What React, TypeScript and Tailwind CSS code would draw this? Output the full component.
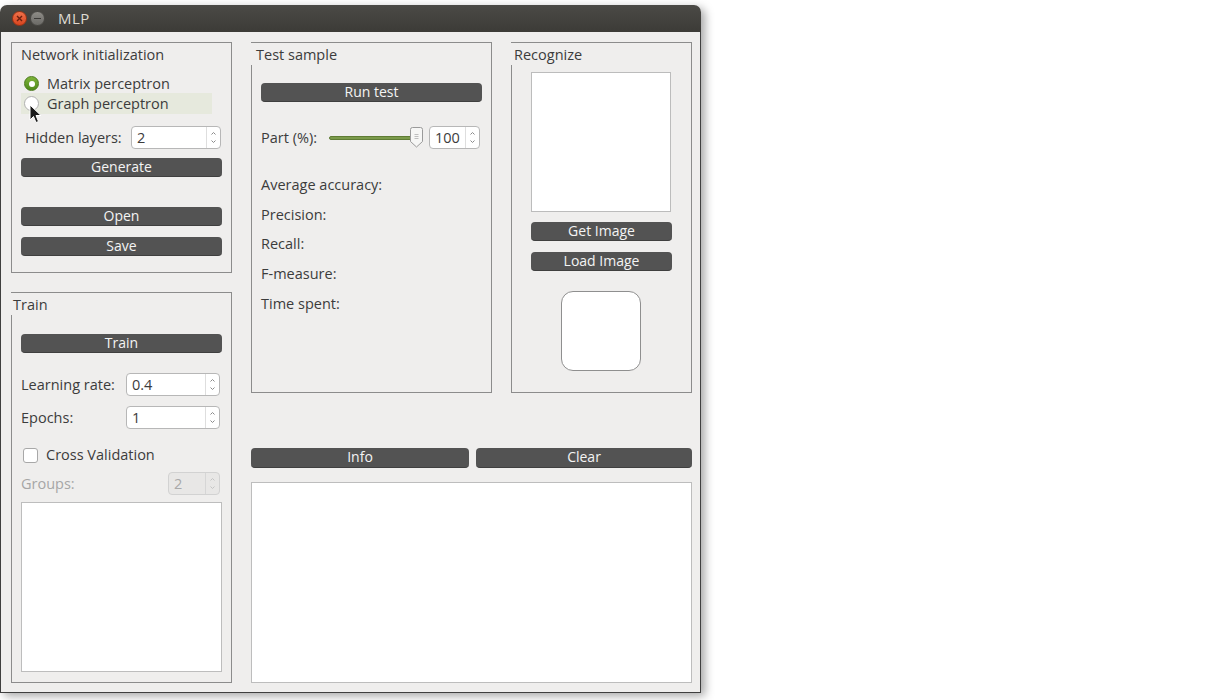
import React from "react";

const txt = "text-[#3c3c3c]";
const fs = "text-[14.5px]";

function Btn({ children, className = "" }: { children: React.ReactNode; className?: string }) {
  return (
    <div
      className={`h-[19px] rounded-[4px] bg-[#535353] border-b border-[#3f3f3f] text-[#f4f4f4] text-[14px] leading-[18px] text-center ${className}`}
    >
      {children}
    </div>
  );
}

function Arrows({ disabled = false }: { disabled?: boolean }) {
  const c = disabled ? "#c4c4c4" : "#8a8a8a";
  return (
    <div className={`w-[14px] border-l ${disabled ? "border-[#d6d6d6]" : "border-[#dedede]"} flex flex-col items-center justify-center gap-[5px]`}>
      <svg width="5" height="3" viewBox="0 0 5 3">
        <path d="M0.5 2.5 L2.5 0.5 L4.5 2.5" stroke={c} strokeWidth="1" fill="none" />
      </svg>
      <svg width="5" height="3" viewBox="0 0 5 3">
        <path d="M0.5 0.5 L2.5 2.5 L4.5 0.5" stroke={c} strokeWidth="1" fill="none" />
      </svg>
    </div>
  );
}

function Spin({ value, className = "", disabled = false }: { value: string; className?: string; disabled?: boolean }) {
  return (
    <div
      className={`flex h-[23px] rounded-[4px] border ${
        disabled ? "border-[#d2d2d2] bg-[#e8e7e6] text-[#a9a9a9]" : "border-[#b7b7b7] bg-white text-[#3c3c3c]"
      } ${className}`}
    >
      <div className="flex-1 pl-[5px] text-[14.5px] leading-[21px]">{value}</div>
      <Arrows disabled={disabled} />
    </div>
  );
}

function Group({
  title,
  className = "",
  children,
  titleClass = "",
  cover = true,
}: {
  title: string;
  className?: string;
  children?: React.ReactNode;
  titleClass?: string;
  cover?: boolean;
}) {
  return (
    <div className={`border border-[#8c8c8c] flex flex-col ${className}`}>
      <div className={`h-[22px] pt-[2px] flex items-center ${cover ? "-ml-px bg-[#efeeed] self-start pr-[3px]" : ""} ${titleClass}`}>
        <span className={`${fs} ${txt}`}>{title}</span>
      </div>
      {children}
    </div>
  );
}

export default function App() {
  return (
    <div className="w-[1220px] h-[700px] bg-white pt-[5px] font-['Open_Sans',sans-serif] relative overflow-hidden">
      <div className="w-[701px] h-[688px] flex flex-col rounded-t-[7px] shadow-[4px_3px_10px_rgba(0,0,0,0.35)]">
        {/* title bar */}
        <div className="h-[27px] rounded-t-[7px] bg-gradient-to-b from-[#4b4a46] to-[#3c3b37] flex items-center pl-[12px] shrink-0">
          <div className="w-[15px] h-[15px] rounded-full bg-gradient-to-b from-[#f0714a] to-[#d8441e] border border-[#9a3315] flex items-center justify-center">
            <svg width="7" height="7" viewBox="0 0 7 7">
              <path d="M1 1 L6 6 M6 1 L1 6" stroke="#6b2010" strokeWidth="1.4" />
            </svg>
          </div>
          <div className="w-[15px] h-[15px] rounded-full bg-gradient-to-b from-[#8e8c87] to-[#6b6a66] border border-[#4a4945] ml-[3px] flex items-center justify-center">
            <div className="w-[7px] h-[1.5px] bg-[#3b3a37]" />
          </div>
          <span className="ml-[13px] text-[15px] text-[#dedbd3] font-medium tracking-[0.5px]">MLP</span>
        </div>
        {/* body */}
        <div className="flex-1 bg-[#efeeed] border-x border-b border-[#3f3f3f] pl-[10px] pt-[10px] flex gap-[19px]">
          {/* left column */}
          <div className="w-[221px] flex flex-col gap-[19px]">
            <Group title="Network initialization" className="h-[231px]" cover={false} titleClass="pl-[9px]">
              <div className="pl-[9px] pr-[18px]">
                <div className="h-[20px] mt-[8px] pt-[1px] flex items-center">
                  <div className="w-[15px] h-[15px] rounded-full bg-gradient-to-b from-[#7eb43a] to-[#4f8a1a] border border-[#4b7a1c] flex items-center justify-center ml-[3px]">
                    <div className="w-[6px] h-[6px] rounded-full bg-white" />
                  </div>
                  <span className={`ml-[8px] ${fs} ${txt}`}>Matrix perceptron</span>
                </div>
                <div className="h-[21px] flex items-center bg-[#e6e9dd] mr-[1px]">
                  <div className="w-[15px] h-[15px] rounded-full bg-white border border-[#b0b0b0] ml-[3px]" />
                  <span className={`ml-[8px] ${fs} ${txt}`}>Graph perceptron</span>
                </div>
              </div>
              <div className="flex items-center mt-[12px] pl-[13px]">
                <span className={`${fs} ${txt} w-[106px]`}>Hidden layers:</span>
                <Spin value="2" className="w-[90px]" />
              </div>
              <div className="px-[9px]">
                <Btn className="mt-[9px]">Generate</Btn>
                <Btn className="mt-[30px]">Open</Btn>
                <Btn className="mt-[11px]">Save</Btn>
              </div>
            </Group>
            <Group title="Train" className="h-[391px]" titleClass="pl-[2px]">
              <div className="px-[9px] flex flex-col">
                <Btn className="mt-[19px]">Train</Btn>
                <div className="flex items-center mt-[20px]">
                  <span className={`${fs} ${txt} w-[105px]`}>Learning rate:</span>
                  <Spin value="0.4" className="w-[94px]" />
                </div>
                <div className="flex items-center mt-[10px]">
                  <span className={`${fs} ${txt} w-[105px]`}>Epochs:</span>
                  <Spin value="1" className="w-[94px]" />
                </div>
                <div className="flex items-center mt-[16px] h-[20px]">
                  <div className="w-[15px] h-[15px] rounded-[3px] bg-white border border-[#a8a8a8] ml-[2px]" />
                  <span className={`ml-[8px] ${fs} ${txt}`}>Cross Validation</span>
                </div>
                <div className="flex items-center mt-[7px]">
                  <span className={`${fs} text-[#a6a6a6] w-[147px]`}>Groups:</span>
                  <Spin value="2" disabled className="w-[52px]" />
                </div>
                <div className="mt-[7px] h-[170px] bg-white border border-[#bdbdbd]" />
              </div>
            </Group>
          </div>
          {/* right area */}
          <div className="w-[441px] flex flex-col">
            <div className="flex gap-[19px] h-[351px]">
              <Group title="Test sample" className="w-[241px]" titleClass="pl-[5px]">
                <div className="px-[9px] flex flex-col">
                  <Btn className="mt-[18px]">Run test</Btn>
                  <div className="flex items-center mt-[24px] h-[23px]">
                    <span className={`${fs} ${txt} w-[68px]`}>Part (%):</span>
                    <div className="relative w-[94px] h-[23px] flex items-center">
                      <div className="w-[88px] h-[4px] rounded-full bg-[#7b9a4b] border border-[#5f7c35]" />
                      <div className="absolute left-[81px] top-[1px]">
                        <svg width="13" height="21" viewBox="0 0 13 21">
                          <path
                            d="M2.5 0.5 H10.5 Q12.5 0.5 12.5 2.5 V14.5 L6.5 20 L0.5 14.5 V2.5 Q0.5 0.5 2.5 0.5 Z"
                            fill="#f6f6f5"
                            stroke="#9a9a9a"
                          />
                          <path d="M4.5 7.5 H8.5 M4.5 9.5 H8.5 M4.5 11.5 H8.5" stroke="#b0b0b0" strokeWidth="0.8" />
                        </svg>
                      </div>
                    </div>
                    <Spin value="100" className="w-[51px] ml-[6px]" />
                  </div>
                  <div className={`flex flex-col ${fs} ${txt} mt-[26px] leading-[20px] gap-[9.7px]`}>
                    <span>Average accuracy:</span>
                    <span>Precision:</span>
                    <span>Recall:</span>
                    <span>F-measure:</span>
                    <span>Time spent:</span>
                  </div>
                </div>
              </Group>
              <Group title="Recognize" className="w-[181px]" titleClass="pl-[3px]">
                <div className="pl-[19px] pr-[19px] flex flex-col">
                  <div className="mt-[7px] h-[140px] w-[140px] bg-white border border-[#bcbcbc]" />
                  <Btn className="mt-[10px] w-[141px]">Get Image</Btn>
                  <Btn className="mt-[11px] w-[141px]">Load Image</Btn>
                  <div className="mt-[20px] ml-[30px] w-[80px] h-[80px] rounded-[12px] bg-white border border-[#8f8f8f]" />
                </div>
              </Group>
            </div>
            <div className="flex gap-[7px] mt-[55px]">
              <Btn className="w-[218px] h-[20px]">Info</Btn>
              <Btn className="w-[216px] h-[20px]">Clear</Btn>
            </div>
            <div className="mt-[14px] h-[201px] bg-white border border-[#bdbdbd]" />
          </div>
        </div>
      </div>
      {/* mouse cursor */}
      <svg className="absolute left-[29px] top-[104px]" width="13" height="20" viewBox="0 0 13 20">
        <path d="M1 1 L1 16 L4.5 12.5 L7 18.5 L9.5 17.5 L7 11.5 L12 11.5 Z" fill="#1a1a1a" stroke="#ffffff" strokeWidth="1" />
      </svg>
    </div>
  );
}
